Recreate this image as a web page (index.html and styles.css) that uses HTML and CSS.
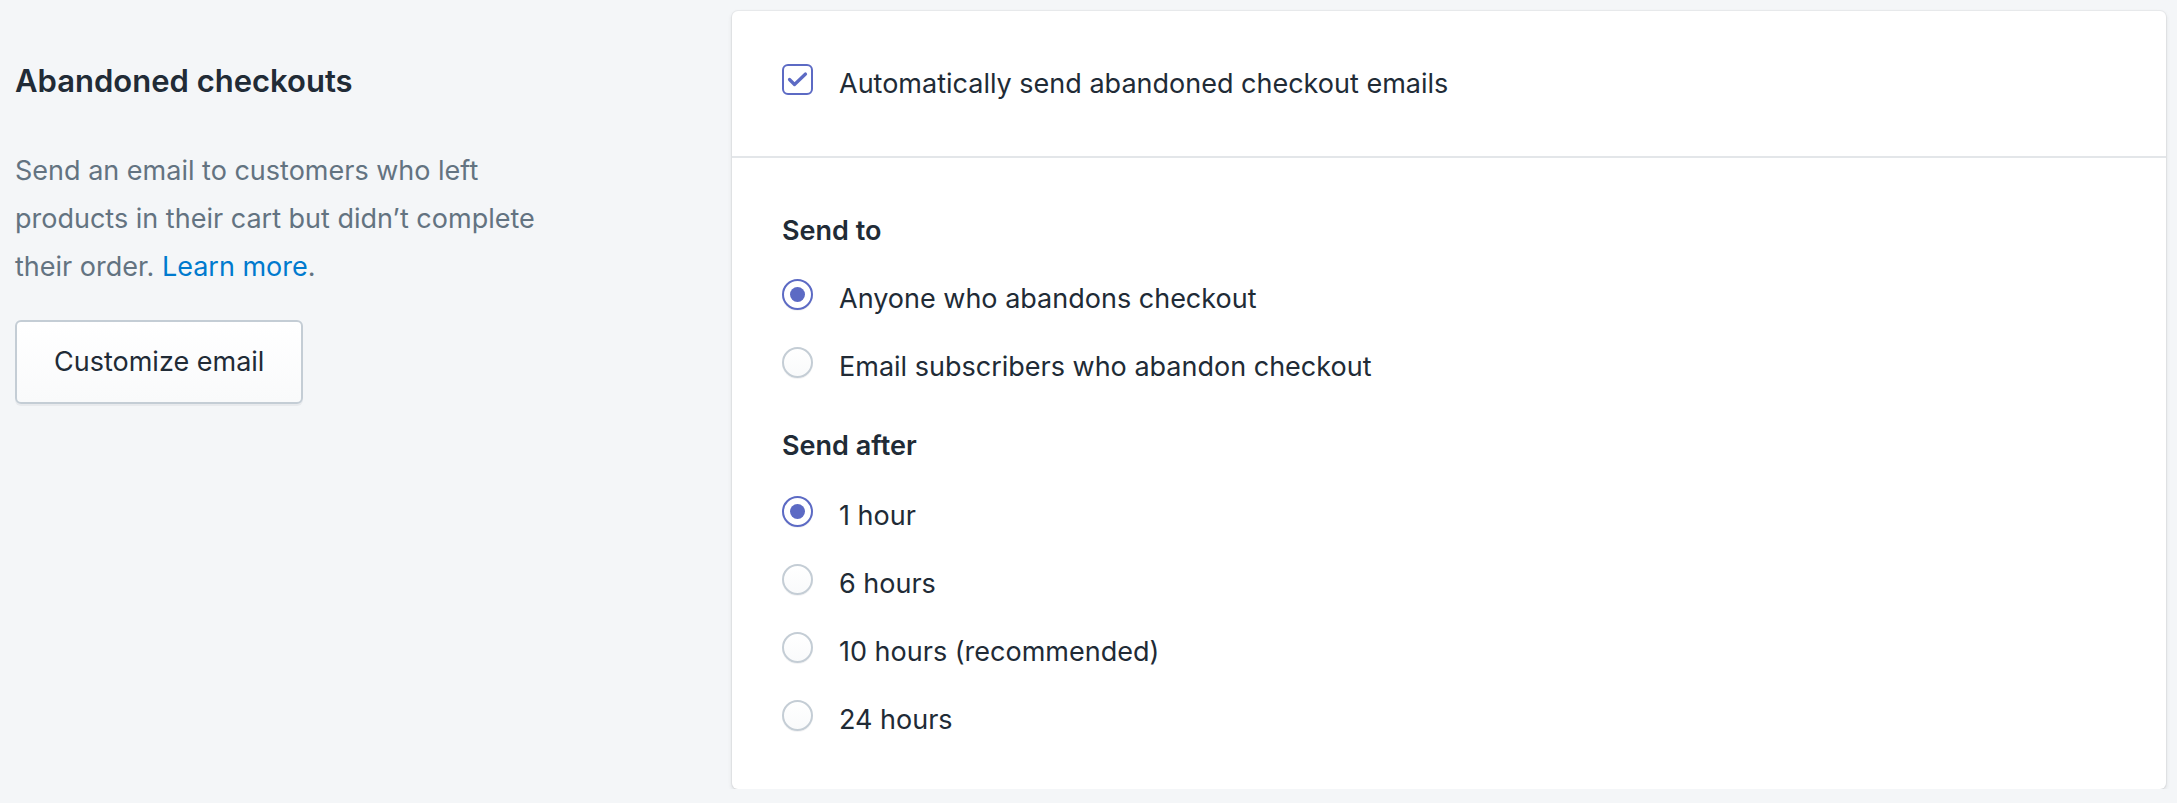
FILE: index.html
```html
<!DOCTYPE html>
<html lang="en">
<head>
  <meta charset="UTF-8">
  <title>Abandoned checkouts</title>
  <link rel="stylesheet" href="styles.css">
</head>
<body>
  <div class="layout">
    <!-- left: section description -->
    <div class="annotation">
      <h2 class="annotation-title">Abandoned checkouts</h2>
      <p class="annotation-text">Send an email to customers who left products in their cart but didn’t complete their order. <a href="#">Learn more</a>.</p>
      <button class="btn">Customize email</button>
    </div>

    <!-- right: settings card -->
    <div class="card">
      <div class="card-section">
        <label class="choice">
          <span class="checkbox is-checked">
            <svg viewBox="0 0 31 31" width="31" height="31"><path d="M7.5 15.5l5 5 11-10.5" fill="none" stroke="#5c6ac4" stroke-width="3.2" stroke-linecap="round" stroke-linejoin="round"/></svg>
          </span>
          <span class="choice-label">Automatically send abandoned checkout emails</span>
        </label>
      </div>

      <div class="card-section">
        <div class="group">
          <div class="group-title">Send to</div>
          <div class="choice-list">
            <label class="choice"><span class="radio is-checked"></span><span class="choice-label">Anyone who abandons checkout</span></label>
            <label class="choice"><span class="radio"></span><span class="choice-label">Email subscribers who abandon checkout</span></label>
          </div>
        </div>

        <div class="group">
          <div class="group-title">Send after</div>
          <div class="choice-list">
            <label class="choice"><span class="radio is-checked"></span><span class="choice-label">1 hour</span></label>
            <label class="choice"><span class="radio"></span><span class="choice-label">6 hours</span></label>
            <label class="choice"><span class="radio"></span><span class="choice-label">10 hours (recommended)</span></label>
            <label class="choice"><span class="radio"></span><span class="choice-label">24 hours</span></label>
          </div>
        </div>
      </div>
    </div>
  </div>
</body>
</html>
```

FILE: styles.css
```css
body {
  margin: 0;
  background: #f4f6f8;
  font-family: Inter, "Noto Sans", sans-serif;
  color: #212b36;
}
.layout {
  display: flex;
  align-items: flex-start;
  padding: 11px 11px 0 15px;
}
.annotation {
  flex: 0 0 717px;
  padding-top: 46px;
}
.annotation-title {
  margin: 0;
  font-size: 31px;
  line-height: 48px;
  font-weight: 600;
  color: #212b36;
}
.annotation-text {
  max-width: 560px;
  margin: 42px 0 29px;
  font-size: 27px;
  line-height: 48px;
  color: #637381;
}
.annotation-text a {
  color: #007ace;
  text-decoration: none;
}
.btn {
  display: inline-block;
  padding: 20px 37px;
  font-family: inherit;
  font-size: 27px;
  line-height: 40px;
  color: #212b36;
  background: linear-gradient(#fff, #f9fafb);
  border: 2px solid #c4cdd5;
  border-radius: 6px;
  box-shadow: 0 2px 0 rgba(22, 29, 37, 0.05);
  cursor: pointer;
}
.card {
  flex: 1;
  background: #fff;
  border-radius: 6px;
  box-shadow: 0 0 0 1px rgba(63, 63, 68, 0.05), 0 2px 4px 0 rgba(63, 63, 68, 0.15);
}
.card-section {
  padding: 53px 50px 52px;
}
.card-section + .card-section {
  border-top: 2px solid #e3e6e9;
  padding-bottom: 49px;
}
.group + .group {
  margin-top: 39px;
}
.group-title {
  font-size: 27px;
  line-height: 40px;
  font-weight: 600;
  margin-bottom: 28px;
}
.group + .group .group-title {
  margin-bottom: 30px;
}
.choice-list {
  display: flex;
  flex-direction: column;
  gap: 28px;
}
.choice {
  display: flex;
  align-items: flex-start;
  gap: 26px;
  font-size: 27px;
  line-height: 40px;
  cursor: pointer;
}
.checkbox, .radio {
  flex: 0 0 31px;
  width: 31px;
  height: 31px;
  box-sizing: border-box;
}
.checkbox {
  border: 2px solid #5c6ac4;
  border-radius: 6px;
  background: #fff;
  position: relative;
}
.checkbox svg {
  position: absolute;
  left: -2px;
  top: -2px;
}
.radio {
  border: 2px solid #c4cdd5;
  border-radius: 50%;
  background: linear-gradient(#fff, #f9fafb);
  box-shadow: 0 1px 0 rgba(22, 29, 37, 0.05);
  position: relative;
}
.radio.is-checked {
  border-color: #5c6ac4;
  background: #fff;
}
.radio.is-checked::after {
  content: "";
  position: absolute;
  left: 6px;
  top: 6px;
  width: 15px;
  height: 15px;
  border-radius: 50%;
  background: #5c6ac4;
}
```
